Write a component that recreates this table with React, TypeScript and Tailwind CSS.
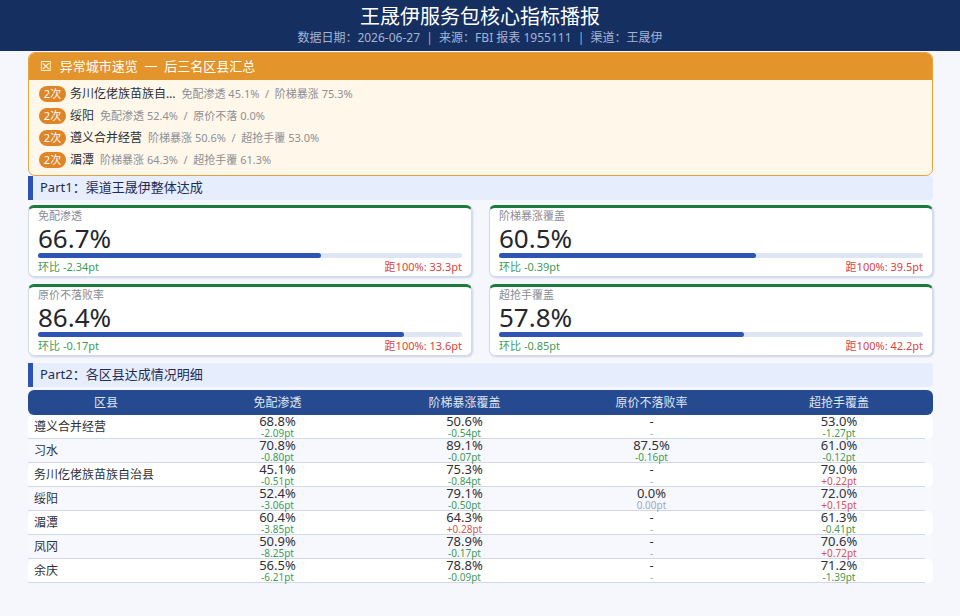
import React from "react";

const FONT = { fontFamily: '"Noto Sans", "Noto Sans CJK SC", "DejaVu Sans", sans-serif' };

const alerts = [
  { name: "务川仡佬族苗族自…", detail: "免配渗透 45.1%  /  阶梯暴涨 75.3%" },
  { name: "绥阳", detail: "免配渗透 52.4%  /  原价不落 0.0%" },
  { name: "遵义合并经营", detail: "阶梯暴涨 50.6%  /  超抢手覆 53.0%" },
  { name: "湄潭", detail: "阶梯暴涨 64.3%  /  超抢手覆 61.3%" },
];

const cards = [
  { label: "免配渗透", value: 66.7, mom: "-2.34pt", gap: "33.3pt" },
  { label: "阶梯暴涨覆盖", value: 60.5, mom: "-0.39pt", gap: "39.5pt" },
  { label: "原价不落败率", value: 86.4, mom: "-0.17pt", gap: "13.6pt" },
  { label: "超抢手覆盖", value: 57.8, mom: "-0.85pt", gap: "42.2pt" },
];

type Cell = [string, string];
const rows: { name: string; cells: Cell[] }[] = [
  { name: "遵义合并经营", cells: [["68.8%", "-2.09pt"], ["50.6%", "-0.54pt"], ["-", "-"], ["53.0%", "-1.27pt"]] },
  { name: "习水", cells: [["70.8%", "-0.80pt"], ["89.1%", "-0.07pt"], ["87.5%", "-0.16pt"], ["61.0%", "-0.12pt"]] },
  { name: "务川仡佬族苗族自治县", cells: [["45.1%", "-0.51pt"], ["75.3%", "-0.84pt"], ["-", "-"], ["79.0%", "+0.22pt"]] },
  { name: "绥阳", cells: [["52.4%", "-3.06pt"], ["79.1%", "-0.50pt"], ["0.0%", "0.00pt"], ["72.0%", "+0.15pt"]] },
  { name: "湄潭", cells: [["60.4%", "-3.85pt"], ["64.3%", "+0.28pt"], ["-", "-"], ["61.3%", "-0.41pt"]] },
  { name: "凤冈", cells: [["50.9%", "-8.25pt"], ["78.9%", "-0.17pt"], ["-", "-"], ["70.6%", "+0.72pt"]] },
  { name: "余庆", cells: [["56.5%", "-6.21pt"], ["78.8%", "-0.09pt"], ["-", "-"], ["71.2%", "-1.39pt"]] },
];

function deltaColor(d: string) {
  if (d.startsWith("+")) return "text-[#d9534f]";
  if (d.startsWith("-") && d.length > 1) return "text-[#3f9b57]";
  return "text-[#a3a8b3]";
}

function SectionTitle({ children }: { children: React.ReactNode }) {
  return (
    <div className="flex h-[24px] items-center rounded-r-[4px] border-l-[5px] border-[#2c53b3] bg-[#e6edfd] pl-[7px] text-[13px] text-[#1f2c52]">
      {children}
    </div>
  );
}

function MetricCard({ c }: { c: (typeof cards)[number] }) {
  return (
    <div className="rounded-[6px] border border-[#d3dae8] border-t-[3px] border-t-[#1b7b3c] bg-white px-[9px] pt-[0px] pb-[2px] shadow-[1px_1px_2px_rgba(120,140,180,0.35)]">
      <div className="text-[11px] leading-[16px] text-[#8a8d95]">{c.label}</div>
      <div className="text-[26px] leading-[28px] text-[#25272c]">{c.value.toFixed(1)}%</div>
      <div className="mt-[1px] h-[5px] w-full rounded-full bg-[#dfe6f3]">
        <div className="h-full rounded-full bg-[#2f55b4]" style={{ width: `${c.value}%` }} />
      </div>
      <div className="mt-[1px] flex justify-between text-[11px] leading-[15px]">
        <span className="text-[#3f9b57]">环比 {c.mom}</span>
        <span className="text-[#d9443e]">距100%: {c.gap}</span>
      </div>
    </div>
  );
}

export default function App() {
  return (
    <div className="min-h-[616px] w-[960px] bg-[#f5f7fd]" style={FONT}>
      <header className="flex h-[51px] flex-col items-center justify-center bg-[#152f61] pb-[2px]">
        <div className="text-[20px] leading-[26px] text-white">王晟伊服务包核心指标播报</div>
        <div className="text-[12px] leading-[16px] text-[#a6b4d4]">
          数据日期：2026-06-27 &nbsp;|&nbsp; 来源：FBI 报表 1955111 &nbsp;|&nbsp; 渠道：王晟伊
        </div>
      </header>

      <main className="pl-[28px] pr-[27px]">
        <div className="mt-[1px] overflow-hidden rounded-[7px] border-[1.5px] border-[#e8a33d] bg-[#fff8ea]">
          <div className="flex h-[27px] items-center gap-[8px] bg-[#e3942a] pl-[11px] text-[13px] text-white">
            <span>☒</span>
            <span>异常城市速览 &nbsp;一&nbsp; 后三名区县汇总</span>
          </div>
          <div className="pt-[3px] pb-[4px] pl-[10px]">
            {alerts.map((a) => (
              <div key={a.name} className="flex h-[22px] items-center gap-[4px]">
                <span className="flex h-[16px] w-[27px] items-center justify-center rounded-full bg-[#de8527] text-[11px] text-white">
                  2次
                </span>
                <span className="text-[12px] text-[#2d2f33]">{a.name}</span>
                <span className="ml-[2px] whitespace-pre text-[11px] text-[#8d8f95]">{a.detail}</span>
              </div>
            ))}
          </div>
        </div>

        <SectionTitle>Part1：渠道王晟伊整体达成</SectionTitle>

        <div className="mt-[5px] grid grid-cols-2 gap-x-[17px] gap-y-[7px]">
          {cards.map((c) => (
            <MetricCard key={c.label} c={c} />
          ))}
        </div>

        <div className="mt-[7px]">
          <SectionTitle>Part2：各区县达成情况明细</SectionTitle>
        </div>

        <div className="mt-[3px]">
          <div className="grid h-[25px] grid-cols-[156px_187px_187px_187px_188px] items-center rounded-[6px] bg-[#264a8f] text-center text-[12px] text-[#dfe6f4]">
            <div>区县</div>
            <div>免配渗透</div>
            <div>阶梯暴涨覆盖</div>
            <div>原价不落败率</div>
            <div>超抢手覆盖</div>
          </div>
          {rows.map((r, i) => (
            <div key={r.name} className={i % 2 === 0 ? "rounded-[5px] bg-white" : "bg-[#f7f8fe]"}>
              <div className="grid h-[23px] grid-cols-[156px_187px_187px_187px_188px] items-center">
                <div className="pl-[6px] text-[12px] text-[#2f3136]">{r.name}</div>
                {r.cells.map(([v, d], j) => (
                  <div key={j} className="flex flex-col items-center">
                    <span className="text-[13px] leading-[13px] text-[#2f3136]">{v}</span>
                    <span className={`text-[10px] leading-[10px] ${deltaColor(d)}`}>{d}</span>
                  </div>
                ))}
              </div>
              <div className="mr-[8px] h-[1px] bg-[#d3d9e4]" />
            </div>
          ))}
        </div>
      </main>
    </div>
  );
}
